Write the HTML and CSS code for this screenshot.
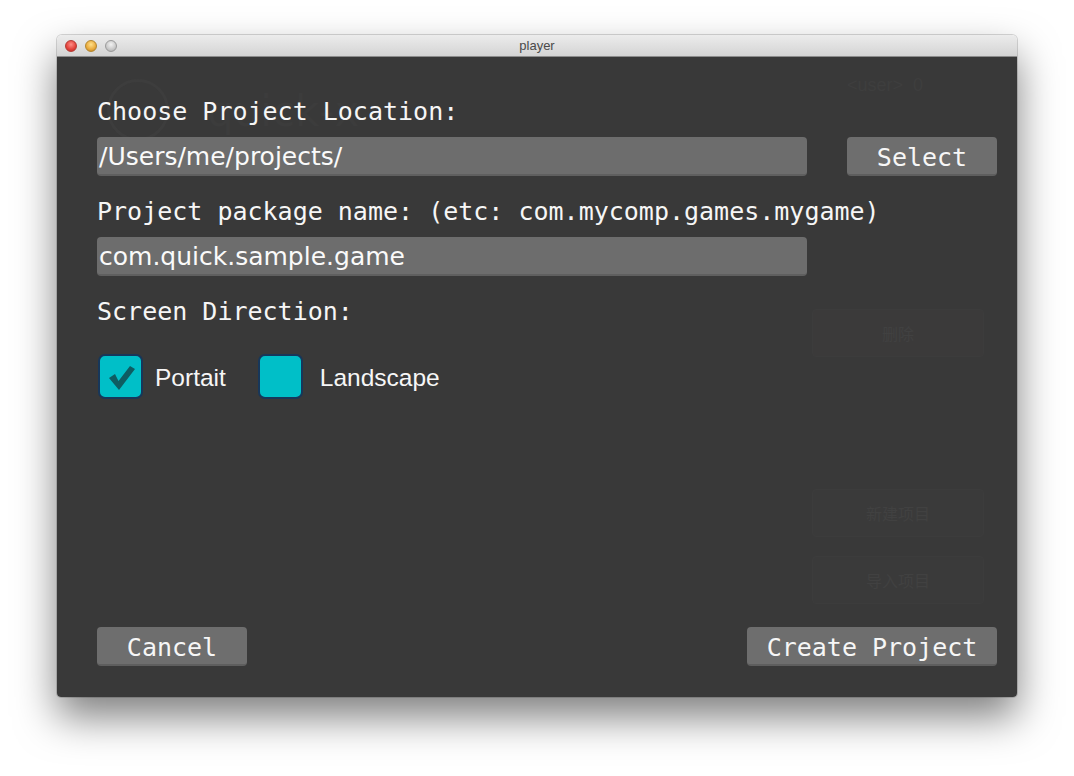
FILE: index.html
```html
<!DOCTYPE html>
<html>
<head>
<meta charset="utf-8">
<link rel="stylesheet" href="styles.css">
</head>
<body>
<div class="window">
  <div class="titlebar">
    <div class="lights">
      <span class="light red"></span>
      <span class="light yellow"></span>
      <span class="light gray"></span>
    </div>
    <div class="title">player</div>
  </div>
  <div class="content">
    <div class="ghost">
      <div class="ghost-logo"></div>
      <div class="ghost-brand">quick-x</div>
      <div class="ghost-user">&lt;user&gt; &nbsp;0</div>
      <div class="ghost-btn g1">删除</div>
      <div class="ghost-btn g2">新建项目</div>
      <div class="ghost-btn g3">导入项目</div>
    </div>
    <div class="form">
      <div class="label first">Choose Project Location:</div>
      <div class="row">
        <div class="field">/Users/me/projects/</div>
        <div class="btn select">Select</div>
      </div>
      <div class="label">Project package name: (etc: com.mycomp.games.mygame)</div>
      <div class="row">
        <div class="field">com.quick.sample.game</div>
      </div>
      <div class="label">Screen Direction:</div>
      <div class="checks">
        <div class="check">
          <span class="box">
            <svg width="30" height="30" viewBox="0 0 30 30"><path d="M3 15 L9 11 L12.5 18 L24 3 L29 6 L13 27 Z" fill="#0e5c62"/></svg>
          </span>
          <span class="check-label">Portait</span>
        </div>
        <div class="check">
          <span class="box"></span>
          <span class="check-label">Landscape</span>
        </div>
      </div>
      <div class="actions">
        <div class="btn cancel">Cancel</div>
        <div class="btn create">Create Project</div>
      </div>
    </div>
  </div>
</div>
</body>
</html>
```
FILE: styles.css
```css
html, body {
  margin: 0;
  padding: 0;
  background: #ffffff;
}
body {
  width: 1074px;
  height: 776px;
  overflow: hidden;
  padding-top: 35px;
  box-sizing: border-box;
}
.window {
  margin-left: 57px;
  width: 960px;
  height: 662px;
  border-radius: 5px 5px 4px 4px;
  overflow: hidden;
  box-shadow: 0 20px 40px rgba(0,0,0,0.5), 0 0 0 1px rgba(0,0,0,0.15);
  display: flex;
  flex-direction: column;
}
.titlebar {
  height: 22px;
  background: linear-gradient(#ececec, #d4d4d4);
  border-bottom: 1px solid #8c8c8c;
  box-sizing: border-box;
  position: relative;
  display: flex;
  align-items: center;
}
.lights {
  display: flex;
  gap: 8px;
  padding-left: 8px;
}
.light {
  width: 12px;
  height: 12px;
  border-radius: 50%;
  box-sizing: border-box;
}
.light.red { background: radial-gradient(circle at 50% 35%, #ff8d86, #e2413a 60%, #b02a24); border: 1px solid #b43a33; }
.light.yellow { background: radial-gradient(circle at 50% 35%, #ffe08a, #e9a93b 60%, #b07a1d); border: 1px solid #b2862e; }
.light.gray { background: radial-gradient(circle at 50% 35%, #f2f2f2, #c8c8c8 60%, #a5a5a5); border: 1px solid #9a9a9a; }
.title {
  position: absolute;
  left: 0;
  right: 0;
  top: 3px;
  text-align: center;
  font-family: "Liberation Sans", Arial, sans-serif;
  font-size: 13px;
  color: #4a4a4a;
}
.content {
  flex: 1;
  background: #393939;
  position: relative;
}
.ghost {
  position: absolute;
  inset: 0;
  pointer-events: none;
}
.ghost-logo {
  position: absolute;
  left: 50px;
  top: 22px;
  width: 56px;
  height: 56px;
  border-radius: 50%;
  border: 3px solid #3d3d3d;
}
.ghost-brand {
  position: absolute;
  left: 150px;
  top: 30px;
  font-family: "DejaVu Sans", sans-serif;
  font-size: 42px;
  color: #3c3c3c;
}
.ghost-user {
  position: absolute;
  left: 790px;
  top: 18px;
  font-family: "Liberation Sans", sans-serif;
  font-size: 18px;
  color: #3e3e3e;
}
.ghost-btn {
  position: absolute;
  left: 755px;
  width: 170px;
  height: 46px;
  border: 1px solid #3c3c3c;
  background: #3a3a3a;
  border-radius: 4px;
  display: flex;
  align-items: center;
  justify-content: center;
  font-family: "Noto Sans CJK SC", sans-serif;
  font-size: 16px;
  color: #414141;
}
.ghost-btn.g1 { top: 252px; background: #3b3a3a; }
.ghost-btn.g2 { top: 432px; }
.ghost-btn.g3 { top: 499px; }
.form {
  position: relative;
  height: 100%;
  box-sizing: border-box;
  padding: 40px 20px 31px 40px;
  display: flex;
  flex-direction: column;
}
.label {
  font-family: "DejaVu Sans Mono", monospace;
  font-size: 25px;
  line-height: 30px;
  color: #f6f6f6;
  margin-top: 21px;
  height: 30px;
}
.label.first { margin-top: 0; }
.row {
  display: flex;
  align-items: center;
  margin-top: 10px;
}
.field {
  width: 710px;
  height: 39px;
  box-sizing: border-box;
  background: #6d6d6d;
  border-radius: 4px;
  border-bottom: 2px solid #5f5f5f;
  padding-left: 2px;
  font-family: "DejaVu Sans", sans-serif;
  font-size: 25px;
  line-height: 39px;
  color: #fafafa;
  white-space: nowrap;
}
.btn {
  height: 39px;
  box-sizing: border-box;
  background: #6e6e6e;
  border-radius: 4px;
  border-bottom: 2px solid #5e5e5e;
  font-family: "DejaVu Sans Mono", monospace;
  font-size: 25px;
  line-height: 41px;
  color: #f6f6f6;
  text-align: center;
}
.select {
  width: 150px;
  margin-left: 40px;
}
.checks {
  display: flex;
  align-items: center;
  margin-top: 27px;
}
.check {
  display: flex;
  align-items: center;
}
.check + .check { margin-left: 31px; }
.box {
  width: 45px;
  height: 45px;
  box-sizing: border-box;
  background: #00bfc8;
  border: 2px solid #17375a;
  border-radius: 7px;
  display: flex;
  align-items: center;
  justify-content: center;
  margin-left: 1px;
}
.box svg { margin-top: 2px; margin-left: 1px; }
.check-label {
  font-family: "Liberation Sans", Arial, sans-serif;
  font-size: 24.5px;
  color: #f6f6f6;
  margin-left: 12px;
  padding-top: 2px;
}
.check + .check .check-label { margin-left: 17px; }
.actions {
  margin-top: auto;
  display: flex;
  justify-content: space-between;
}
.cancel { width: 150px; }
.create { width: 250px; }
```
